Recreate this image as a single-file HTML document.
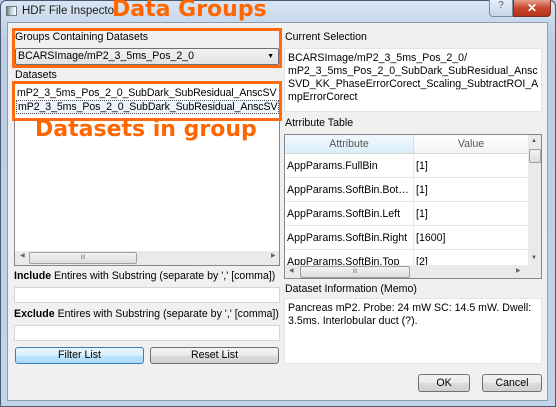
<!DOCTYPE html>
<html><head><style>
*{box-sizing:border-box;margin:0;padding:0}
body{width:556px;height:407px;overflow:hidden;font-family:"Liberation Sans",sans-serif;font-size:10.6px;color:#000;background:#bcd0e6;position:relative}
.a{position:absolute}
.frame{left:0;top:0;width:556px;height:407px;background:linear-gradient(#d9e5f3,#b9cde5 40px,#c2d4ea);border-radius:6px 6px 0 0;border:1px solid #4a5a70}
.client{left:7px;top:22px;width:541px;height:379px;background:#f0f0f0;border:1px solid #8e9db0}
.box{background:#fff;border:1px solid #abadb3}
.lbl{white-space:nowrap}
.og{color:#ff6600;font-weight:bold;white-space:nowrap;font-family:"DejaVu Sans",sans-serif}
.obox{border:3px solid #ff6a10}
.btn{border:1px solid #707070;border-radius:3px;background:linear-gradient(#f2f2f2,#ebebeb 50%,#dddddd 50%,#cfcfcf);text-align:center;line-height:15px}
.sb{background:#eaeaea}
.thumb{background:linear-gradient(#f3f3f3,#dcdcdc);border:1px solid #a0a0a0;border-radius:2px}
.row{border-bottom:1px solid #e8e8e8;height:24px;line-height:24px}
</style></head><body>
<div class="a frame"></div>
<div class="a" style="left:6px;top:6px;width:11px;height:10px;background:linear-gradient(90deg,#5a8a6a,#bcd 40%,#fff);border:1px solid #777"></div>
<div class="a lbl" style="left:22px;top:5px;font-size:11.5px;color:#1a1a1a">HDF File Inspector</div>
<div class="a" style="left:489px;top:0;width:24px;height:17px;border:1px solid #7b8aa0;border-top:none;border-radius:0 0 0 4px;background:linear-gradient(#e6eef8,#c6d6ea);text-align:center;font-size:10px;color:#556">?</div>
<div class="a" style="left:513px;top:0;width:38px;height:17px;border:1px solid #7a3020;border-top:none;border-radius:0 0 4px 0;background:linear-gradient(#e8a090,#c8452c 50%,#b8301c);text-align:center;color:#fff;font-weight:bold;font-size:12px;line-height:16px">✕</div>
<div class="a client"></div>

<div class="a og" style="left:112px;top:-3px;font-size:22px">Data Groups</div>

<div class="a lbl" style="left:15px;top:31px">Groups Containing Datasets</div>
<div class="a" style="left:15px;top:48px;width:264px;height:17px;border:1px solid #707070;border-radius:2px;background:linear-gradient(#f2f2f2,#e2e2e2);padding-left:2px;line-height:15px">BCARSImage/mP2_3_5ms_Pos_2_0<span class="a" style="right:4px;top:0;font-size:7px">▼</span></div>
<div class="a obox" style="left:12px;top:28px;width:270px;height:40px"></div>

<div class="a lbl" style="left:15px;top:69px">Datasets</div>
<div class="a box" style="left:14px;top:82px;width:266px;height:184px;border-color:#828790"></div>
<div class="a lbl" style="left:17px;top:87px;letter-spacing:-0.1px">mP2_3_5ms_Pos_2_0_SubDark_SubResidual_AnscSV</div>
<div class="a lbl" style="left:16px;top:100px;width:263px;height:14px;border:1px dotted #555;background:#eef4fb;line-height:12px;padding-left:1px;overflow:hidden;letter-spacing:-0.1px">mP2_3_5ms_Pos_2_0_SubDark_SubResidual_AnscSV</div>
<div class="a obox" style="left:12px;top:81px;width:270px;height:40px"></div>
<div class="a og" style="left:35px;top:117px;font-size:22px">Datasets in group</div>
<div class="a sb" style="left:15px;top:251px;width:264px;height:14px"></div>
<div class="a thumb" style="left:29px;top:252px;width:108px;height:12px;text-align:center;font-size:6px;line-height:10px;color:#777">III</div>
<div class="a" style="left:20px;top:252px;font-size:6px;color:#666">◀</div>
<div class="a" style="left:271px;top:252px;font-size:6px;color:#666">▶</div>

<div class="a lbl" style="left:14px;top:270px"><b>Include</b> Entires with Substring (separate by ',' [comma])</div>
<div class="a box" style="left:14px;top:287px;width:266px;height:16px;border-color:#d5d5d5"></div>
<div class="a lbl" style="left:14px;top:308px"><b>Exclude</b> Entires with Substring (separate by ',' [comma])</div>
<div class="a box" style="left:14px;top:325px;width:266px;height:16px;border-color:#d5d5d5"></div>
<div class="a btn" style="left:15px;top:347px;width:129px;height:17px;border-color:#3c7fb1;background:linear-gradient(#eaf6fd,#d9f0fc 50%,#bee6fd 50%,#a7d9f5)">Filter List</div>
<div class="a btn" style="left:150px;top:347px;width:129px;height:17px">Reset List</div>

<div class="a lbl" style="left:285px;top:31px">Current Selection</div>
<div class="a box" style="left:284px;top:48px;width:258px;height:64px;border-color:#e3e3e3;padding:3px 0 0 3px;line-height:13px;white-space:normal">BCARSImage/mP2_3_5ms_Pos_2_0/<br>mP2_3_5ms_Pos_2_0_SubDark_SubResidual_Ansc<br>SVD_KK_PhaseErrorCorect_Scaling_SubtractROI_A<br>mpErrorCorect</div>

<div class="a lbl" style="left:285px;top:117px">Atrribute Table</div>
<div class="a box" style="left:284px;top:134px;width:258px;height:145px;border-color:#828790;overflow:hidden">
 <div class="a" style="left:0;top:0;width:129px;height:19px;background:linear-gradient(#f2f9fd,#d9eef9);border-right:1px solid #c5e3f4;border-bottom:1px solid #d5d5d5;text-align:center;line-height:19px;color:#555">Attribute</div>
 <div class="a" style="left:129px;top:0;width:114px;height:19px;background:linear-gradient(#fff,#f3f3f3);border-bottom:1px solid #d5d5d5;text-align:center;line-height:19px;color:#555">Value</div>
 <div class="a" style="left:60px;top:-4px;font-size:6px;color:#7ab">▲</div>
 <div class="a" style="left:0;top:19px;width:243px">
  <div class="row"><span class="a" style="left:2px">AppParams.FullBin</span><span class="a" style="left:131px">[1]</span></div>
  <div class="row"><span class="a" style="left:2px">AppParams.SoftBin.Bot…</span><span class="a" style="left:131px">[1]</span></div>
  <div class="row"><span class="a" style="left:2px">AppParams.SoftBin.Left</span><span class="a" style="left:131px">[1]</span></div>
  <div class="row"><span class="a" style="left:2px">AppParams.SoftBin.Right</span><span class="a" style="left:131px">[1600]</span></div>
  <div class="row"><span class="a" style="left:2px">AppParams.SoftBin.Top</span><span class="a" style="left:131px">[2]</span></div>
 </div>
 <div class="a" style="left:128px;top:19px;width:1px;height:130px;background:#e8e8e8"></div>
 <div class="a sb" style="left:243px;top:0;width:14px;height:130px"></div>
 <div class="a thumb" style="left:244px;top:14px;width:12px;height:14px"></div>
 <div class="a" style="left:246px;top:3px;font-size:6px;color:#555">▲</div>
 <div class="a" style="left:246px;top:120px;font-size:6px;color:#555">▼</div>
 <div class="a sb" style="left:0;top:130px;width:258px;height:14px"></div>
 <div class="a thumb" style="left:15px;top:131px;width:110px;height:12px;text-align:center;font-size:6px;line-height:10px;color:#777">III</div>
 <div class="a" style="left:4px;top:132px;font-size:6px;color:#666">◀</div>
 <div class="a" style="left:231px;top:132px;font-size:6px;color:#666">▶</div>
</div>

<div class="a lbl" style="left:285px;top:283px">Dataset Information (Memo)</div>
<div class="a box" style="left:284px;top:298px;width:258px;height:66px;border-color:#e3e3e3;padding:3px 0 0 3px;line-height:13px">Pancreas mP2. Probe: 24 mW SC: 14.5 mW. Dwell:<br>3.5ms. Interlobular duct (?).</div>

<div class="a btn" style="left:418px;top:374px;width:52px;height:18px;line-height:16px">OK</div>
<div class="a btn" style="left:482px;top:374px;width:60px;height:18px;line-height:16px">Cancel</div>
</body></html>
